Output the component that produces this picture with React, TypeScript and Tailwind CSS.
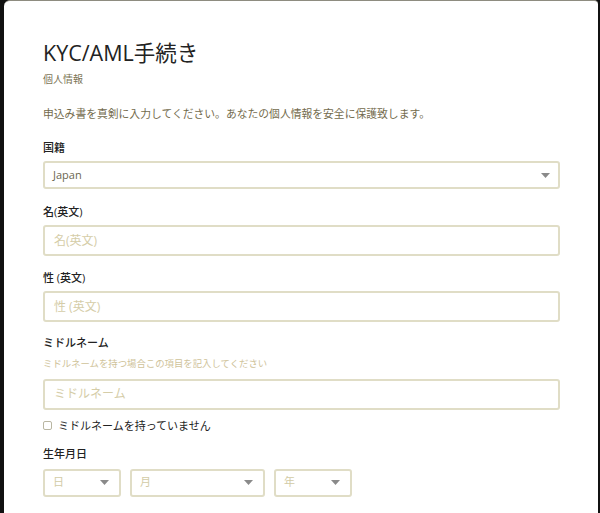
import React from "react";

const font = { fontFamily: '"Open Sans", "Noto Sans CJK JP", sans-serif' };

function Caret() {
  return (
    <svg width="9" height="5" viewBox="0 0 9 5" className="shrink-0">
      <path d="M0 0 L9 0 L4.5 5 Z" fill="#8a8a8a" />
    </svg>
  );
}

function SelectBox({ value, placeholder, className }: { value?: string; placeholder?: string; className?: string }) {
  return (
    <div
      className={`flex items-center justify-between h-[28px] rounded-[3px] border-2 border-[#e0ddc6] px-[8px] ${className ?? ""}`}
    >
      <span className={`text-[11px] ${value ? "text-[#6b6650]" : "text-[#d2cba6]"}`}>{value ?? placeholder}</span>
      <Caret />
    </div>
  );
}

function TextBox({ placeholder }: { placeholder: string }) {
  return (
    <div className="flex items-center h-[31px] rounded-[3px] border-2 border-[#e0ddc6] px-[9px]">
      <span className="text-[12px] text-[#d5cda8]">{placeholder}</span>
    </div>
  );
}

function Label({ children }: { children: React.ReactNode }) {
  return <div className="text-[11px] font-medium text-[#222] leading-none">{children}</div>;
}

export default function App() {
  return (
    <div className="w-[600px] h-[513px] bg-[#111] pl-[4px] pr-[2px] overflow-hidden" style={font}>
      <div className="h-full bg-white rounded-tl-[6px] rounded-tr-[4px] border-t border-[#8e8c80] pl-[39px] pr-[38px] pt-[41px]">
        <h1 className="text-[21.5px] leading-none text-[#222] font-normal">KYC/AML手続き</h1>
        <div className="mt-[10px] text-[10px] text-[#7c7556] leading-none">個人情報</div>
        <div className="mt-[25px] text-[10.8px] text-[#736b4d] leading-none">
          申込み書を真剣に入力してください。あなたの個人情報を安全に保護致します。
        </div>

        <div className="mt-[23px]">
          <Label>国籍</Label>
          <SelectBox value="Japan" className="mt-[8px]" />
        </div>

        <div className="mt-[17px]">
          <Label>名(英文)</Label>
          <div className="mt-[8px]">
            <TextBox placeholder="名(英文)" />
          </div>
        </div>

        <div className="mt-[16px]">
          <Label>性 (英文)</Label>
          <div className="mt-[8px]">
            <TextBox placeholder="性 (英文)" />
          </div>
        </div>

        <div className="mt-[15px]">
          <Label>ミドルネーム</Label>
          <div className="mt-[11px] text-[9.4px] text-[#cfc39a] leading-none">
            ミドルネームを持つ場合この項目を記入してください
          </div>
          <div className="mt-[10px]">
            <TextBox placeholder="ミドルネーム" />
          </div>
        </div>

        <div className="mt-[10px] flex items-center gap-[6px]">
          <span className="w-[9px] h-[9px] rounded-[2px] border border-[#b9b6a2] bg-white" />
          <span className="text-[11px] text-[#222] leading-none">ミドルネームを持っていません</span>
        </div>

        <div className="mt-[17px]">
          <Label>生年月日</Label>
          <div className="mt-[10px] flex gap-[9px]">
            <SelectBox placeholder="日" className="w-[78px] pr-[10px]" />
            <SelectBox placeholder="月" className="w-[135px] pr-[10px]" />
            <SelectBox placeholder="年" className="w-[78px] pr-[10px]" />
          </div>
        </div>

        <div className="mt-[16px]">
          <Label>性別</Label>
        </div>
      </div>
    </div>
  );
}
